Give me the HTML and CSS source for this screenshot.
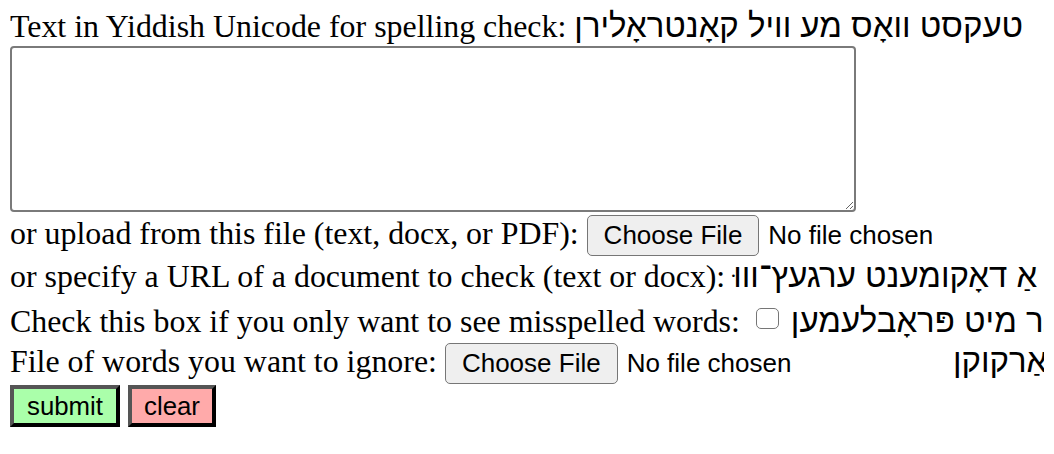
FILE: index.html
```html
<!DOCTYPE html>
<html lang="en">
<head>
<meta charset="utf-8">
<title>Yiddish spell checker</title>
<link rel="stylesheet" href="styles.css">
</head>
<body>
<form class="form">
  <div class="row row-first">Text in Yiddish Unicode for spelling check: <span class="yi" dir="rtl">טעקסט וואָס מע וויל קאָנטראָלירן</span></div>
  <textarea class="text" name="text"></textarea>
  <div class="row row-file">or upload from this file (text, docx, or PDF): <input class="file" type="file" name="file"> <span class="yi" dir="rtl">אָדער לאָדט אַרויף פֿון דער טעקע</span></div>
  <div class="row row-url">or specify a URL of a document to check (text or docx): <span class="yi" dir="rtl">אָדער גיט אָן אַ לינק צו אַ דאָקומענט ערגעץ־וווּ</span></div>
  <div class="row row-check">Check this box if you only want to see misspelled words: <input class="check" type="checkbox" name="only"> <span class="yi" dir="rtl">קוקן נאָר אויף ווערטער מיט פּראָבלעמען</span></div>
  <div class="row row-ignore">File of words you want to ignore: <input class="file" type="file" name="ignore"> <span class="yi" dir="rtl">טעקע פֿון ווערטער צו פֿאַרקוקן</span></div>
  <div class="actions">
    <button class="btn btn-submit" type="submit">submit</button>
    <button class="btn btn-clear" type="reset">clear</button>
  </div>
</form>
</body>
</html>
```
FILE: styles.css
```css
html, body {
  overflow: hidden;
}
body {
  margin: 9px 10px;
  font-family: "Liberation Serif", "Times New Roman", serif;
  font-size: 31.9px;
  color: #000;
  background: #fff;
}
.form {
  display: block;
  margin: 0;
}
.row {
  white-space: nowrap;
}
.row-first {
  height: 37px;
}
.row-file {
  margin-top: 3px;
  height: 44px;
}
.row-url {
  height: 45px;
}
.row-check {
  height: 39px;
}
.row-ignore {
  height: 42px;
}
.yi {
  font-family: "Liberation Sans", Arial, sans-serif;
  font-size: 33px;
  line-height: 1;
}
.text {
  display: block;
  box-sizing: border-box;
  width: 846px;
  height: 166px;
  margin: 0;
  border: 2px solid #7a7a7a;
  border-radius: 4px;
  resize: both;
}
.file {
  width: 500px;
  font-family: "Liberation Sans", Arial, sans-serif;
  font-size: 26px;
  color: #000;
}
.file::file-selector-button {
  box-sizing: border-box;
  height: 41px;
  padding: 0 16px;
  margin: 0 9px 0 0;
  border: 1px solid #767676;
  border-radius: 5px;
  background: #efefef;
  font: inherit;
  color: #000;
}
.check {
  appearance: none;
  box-sizing: border-box;
  width: 23px;
  height: 21px;
  margin: 4px 4px 0 8px;
  vertical-align: top;
  border: 1.5px solid #767676;
  border-radius: 5px;
  background: #fff;
}
.actions {
  display: flex;
  gap: 8px;
}
.btn {
  box-sizing: border-box;
  height: 42px;
  padding: 0;
  border-style: solid;
  border-width: 4px;
  border-color: #555 #000 #000 #555;
  font-family: "Liberation Sans", Arial, sans-serif;
  font-size: 25.8px;
  color: #000;
}
.btn-submit {
  width: 110px;
  background: #aaffaa;
}
.btn-clear {
  width: 88px;
  background: #ffaaaa;
}
```
